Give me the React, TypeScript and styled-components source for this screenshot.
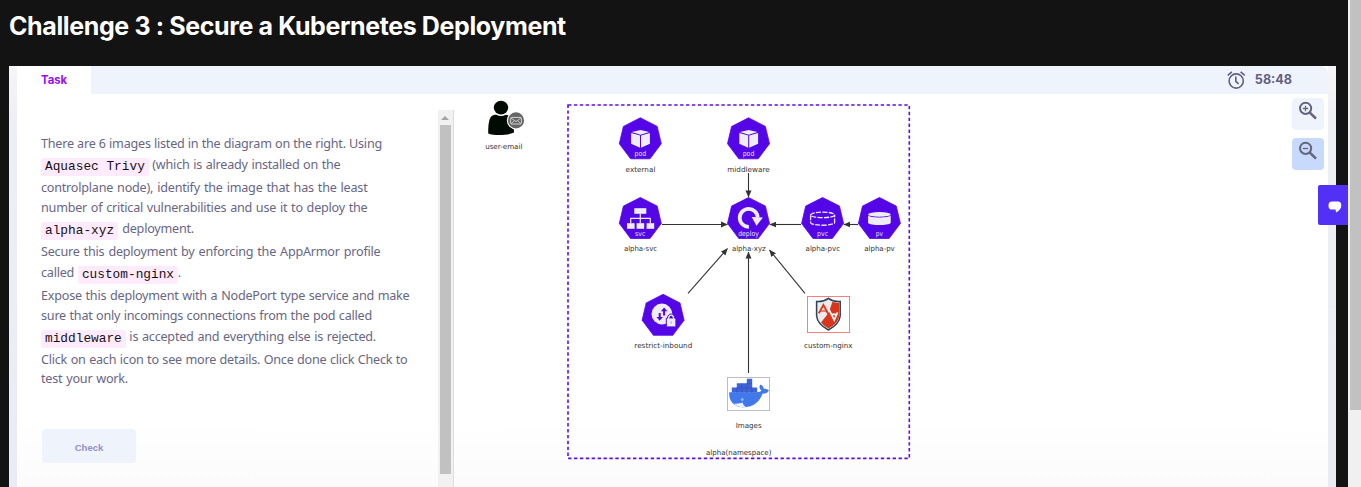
import React from "react";
import styled, { createGlobalStyle } from "styled-components";

const GlobalStyle = createGlobalStyle`
  * { box-sizing: border-box; }
  body { margin: 0; background: #131313; overflow: hidden; }
`;

const Page = styled.div`
  display: flex;
  width: 1361px;
  height: 487px;
  overflow: hidden;
  background: #131313;
`;

const Main = styled.main`
  position: relative;
  display: flex;
  flex-direction: column;
  width: 1348px;
`;

const Title = styled.h1`
  margin: 0;
  height: 66px;
  padding: 11px 0 0 9px;
  color: #fff;
  font: 700 25px/30px Inter, sans-serif;
  letter-spacing: -0.38px;
  white-space: nowrap;
`;

const Frame = styled.div`
  flex: 1;
  display: flex;
  margin: 0 12px 0 9px;
  padding: 0 8px;
  background: linear-gradient(180deg, #f6f6f8 0, #eeeef5 50px, #ebecf3 100%);
`;

const Panel = styled.section`
  flex: 1;
  display: flex;
  flex-direction: column;
  background: linear-gradient(180deg, #fff 84%, #fbfbfb 100%);
`;

const TabBar = styled.header`
  display: flex;
  justify-content: space-between;
  height: 28px;
  background: #eff3fc;
  border-top-right-radius: 8px;
`;

const Tab = styled.div`
  width: 74px;
  padding-left: 24px;
  background: #fff;
  color: #9b0bfb;
  font: 700 11.3px/28px Inter, sans-serif;
`;

const Timer = styled.div`
  display: flex;
  align-items: center;
  gap: 9px;
  margin-right: 36px;
  color: #5f5f80;
  font: 700 12.6px/26px Inter, sans-serif;
`;

const Columns = styled.div`
  flex: 1;
  display: flex;
  min-height: 0;
`;

const TaskPane = styled.div`
  width: 421px;
  padding: 40px 0 0 24px;
`;

const Line = styled.div<{ $width: number; $code?: boolean; $last?: boolean }>`
  width: ${(p) => p.$width}px;
  height: ${(p) => (p.$code ? 24 : p.$last ? 18 : 20)}px;
  color: #696683;
  font-family: "Noto Sans", sans-serif;
  font-size: 12.6px;
  line-height: ${(p) => (p.$code ? 22 : p.$last ? 18 : 20)}px;
  letter-spacing: -0.22px;
  text-align-last: justify;
  white-space: nowrap;
`;

const Code = styled.code`
  display: inline-block;
  height: 18px;
  padding: 0 3.8px 0 4px;
  border-radius: 2px;
  background: #ffebfb;
  color: #161016;
  font: 12.8px/17px "Liberation Mono", monospace;
  letter-spacing: 0;
  vertical-align: -1px;
`;

const CheckButton = styled.button`
  display: block;
  width: 94px;
  height: 34px;
  margin: 41px 0 0 1px;
  padding: 3px 0 0;
  border: 0;
  border-radius: 3px;
  background: #eff3fb;
  color: #9590c4;
  font: 700 9.5px "Liberation Sans", sans-serif;
`;

const PaneScroll = styled.div`
  display: flex;
  flex-direction: column;
  align-items: center;
  width: 16px;
  margin-top: 16px;
  padding-right: 1px;
  background: #f1f1f1;
  border-right: 1px solid #dcdbe9;
`;

const ArrowUp = styled.div`
  width: 0;
  height: 0;
  margin: 6px 0 5px;
  border: 4px solid transparent;
  border-top: 0;
  border-bottom-color: #a3a3a3;
`;

const PaneThumb = styled.div`
  width: 11px;
  height: 349px;
  background: #c1c1c1;
`;

const Canvas = styled.svg`
  display: block;
  width: 838px;
  height: 393px;
`;

const Tools = styled.div`
  display: flex;
  flex-direction: column;
  gap: 8px;
  padding-top: 4px;
`;

const ToolButton = styled.button<{ $active?: boolean }>`
  display: flex;
  width: 32px;
  height: 32px;
  padding: 3px 0 0 6px;
  border: 0;
  border-radius: 4px;
  background: ${(p) => (p.$active ? "#c8dafc" : "#eff3fb")};
`;

const Chat = styled.button`
  position: absolute;
  right: 0;
  top: 185px;
  width: 30px;
  height: 40px;
  padding: 7px 0 0 3px;
  border: 0;
  border-radius: 2px 0 0 2px;
  background: #5230f5;
`;

const PageScroll = styled.aside`
  width: 13px;
  padding-left: 2px;
  background: #f0f0f0;
`;

const PageThumb = styled.div`
  height: 410px;
  background: #c1c1c1;
`;

const Hepta = ({ x, y, label, width, children }: {
  x: number; y: number; label?: string; width?: number; children: React.ReactNode;
}) => (
  <g transform={`translate(${x} ${y})`}>
    <path d="M0 0.3 16.9 8.9 21 26.2 9.7 41.3H-9.7L-21 26.2-16.9 8.9Z" fill="#5406e6" stroke="#5406e6" strokeWidth="0.8" strokeLinejoin="round" />
    {children}
    {label && (
      <text y="38.6" textAnchor="middle" textLength={width} lengthAdjust="spacingAndGlyphs" fontSize="7" fill="#e9e7f5" fontFamily="DejaVu Sans, sans-serif">{label}</text>
    )}
  </g>
);

const Pod = () => (
  <g fill="#eeedf3">
    <path d="M-8.6 14.6 0.2 12.6 9 14.6 0.2 17.2Z" />
    <path d="M-9.2 15.5-.3 18.1V30.2L-9.2 26.2Z" />
    <path d="M9.6 15.5.7 18.1V30.2L9.6 26.2Z" />
  </g>
);

const labels: [string, number, number, number][] = [
  ["user-email", 503.8, 148.7, 37.3],
  ["external", 640.5, 171.7, 29.8],
  ["middleware", 748.5, 171.7, 42.4],
  ["alpha-svc", 640.5, 250.7, 33.2],
  ["alpha-xyz", 748.8, 250.7, 33.8],
  ["alpha-pvc", 822.8, 250.7, 34.4],
  ["alpha-pv", 879.5, 250.7, 30.6],
  ["restrict-inbound", 663.3, 347.7, 58],
  ["custom-nginx", 828.3, 347.7, 48.6],
  ["Images", 748.7, 427.7, 26],
  ["alpha(namespace)", 738.7, 454.6, 65.4],
];

const edges: [number, number, number, number][] = [
  [748.5, 173, 748.5, 197],
  [662, 224.5, 727.5, 224.5],
  [801, 224.5, 769.8, 224.5],
  [858, 224.5, 843.8, 224.5],
  [688, 293.3, 727.5, 248.5],
  [805, 293.3, 769.5, 250],
  [748.5, 373, 748.5, 252],
];

const Diagram = () => (
  <Canvas viewBox="454 94 838 393">
    <defs>
      <marker id="head" viewBox="0 0 7 6" refX="6.6" refY="3" markerWidth="7" markerHeight="6.8" markerUnits="userSpaceOnUse" orient="auto">
        <path d="M0 0 7 3 0 6Z" fill="#333" />
      </marker>
    </defs>
    <rect x="568" y="105" width="341.3" height="353.4" fill="none" stroke="#5b0ff0" strokeWidth="1.6" strokeDasharray="3.4 2.5" />
    {edges.map((e, i) => (
      <line key={i} x1={e[0]} y1={e[1]} x2={e[2]} y2={e[3]} stroke="#333" strokeWidth="1.1" markerEnd="url(#head)" />
    ))}

    <g>
      <ellipse cx="501" cy="107.6" rx="7.2" ry="6.8" fill="#020a04" />
      <path d="M488.2 133.4C488.2 121 489.6 115 495 114.7H496.4C499.4 116.4 503 116.4 505.8 114.7 510.4 114.8 514 121 514 132.6 507 135.6 494 135.8 488.2 133.4Z" fill="#020a04" />
      <circle cx="516" cy="120.4" r="8.6" fill="#666" stroke="#fff" strokeWidth="1.1" />
      <rect x="510.6" y="117.4" width="10.8" height="6.6" rx="1.2" fill="none" stroke="#ddd" strokeWidth=".9" />
      <path d="M511 118 516 121.6 521 118M511 123.7 514.4 120.7M521 123.7 517.6 120.7" fill="none" stroke="#ddd" strokeWidth=".8" />
    </g>

    <Hepta x={640.3} y={117.5} label="pod" width={11.6}><Pod /></Hepta>
    <Hepta x={748.5} y={117.5} label="pod" width={11.6}><Pod /></Hepta>
    <Hepta x={640.3} y={197.2} label="svc" width={10.4}>
      <g fill="#eeedf3">
        <rect x="-6" y="11" width="12" height="5.6" />
        <rect x="-13.3" y="26" width="7.6" height="5.6" />
        <rect x="-3.7" y="26" width="7.6" height="5.6" />
        <rect x="6.3" y="26" width="7.6" height="5.6" />
        <path d="M0 16V26M-9.6 26V21.2H10V26" fill="none" stroke="#eeedf3" strokeWidth="1.2" />
      </g>
    </Hepta>
    <Hepta x={748.5} y={197.2} label="deploy" width={20.6}>
      <path d="M0.4 29.6A9 9 0 1 1 9.2 20.4" fill="none" stroke="#eeedf3" strokeWidth="3.8" />
      <path d="M3.2 19.8 14.4 20.2 8 28.6Z" fill="#eeedf3" />
    </Hepta>
    <Hepta x={822.6} y={197.2} label="pvc" width={11}>
      <ellipse cy="17.7" rx="12" ry="2.8" fill="none" stroke="#eeedf3" strokeWidth="1.3" strokeDasharray="5 1.3" />
      <path d="M-12 18V25.2C-12 29 12 29 12 25.2V18" fill="none" stroke="#eeedf3" strokeWidth="1.3" strokeDasharray="5 1.3" />
    </Hepta>
    <Hepta x={879.4} y={197.2} label="pv" width={7.2}>
      <ellipse cy="17.2" rx="11.3" ry="2.3" fill="#eeedf3" />
      <path d="M-11.3 18.4C-9 21 9 21 11.3 18.4V25.8C9 28.6-9 28.6-11.3 25.8Z" fill="#eeedf3" />
    </Hepta>
    <Hepta x={663.1} y={294}>
      <circle cx="-1.2" cy="20" r="10.4" fill="#eeedf3" />
      <path d="M1 13.4 4.2 17.2H2V21.4H0V17.2H-2.2ZM-3.4 26.8-6.6 23H-4.4V19H-2.4V23H-.2Z" fill="#5406e6" />
      <path d="M3.2 32.9V24.2H4.4C4.4 18.6 11.6 18.6 11.6 24.2H12.8V32.9Z" fill="#eeedf3" stroke="#5406e6" strokeWidth="1" />
      <path d="M6.2 24.6C6.2 20.8 9.8 20.8 9.8 24.6Z" fill="#5406e6" />
      <rect x="7.5" y="27" width="1" height="3" fill="#b9a5ea" />
    </Hepta>

    <g>
      <rect x="807.5" y="296.5" width="42" height="36" fill="#fff" stroke="#f77f7f" />
      <path d="M828.4 298.3C832 301 836 301.8 840.2 301.4V316C839.6 322 834 327 828.4 330 822.8 327 817.2 322 816.6 316V301.4C820.8 301.8 824.8 301 828.4 298.3Z" fill="#eceaea" stroke="#294553" strokeWidth="1.5" />
      <path d="M832.4 301.8C835 302.8 837 303 839.2 302.8V315.6C838.8 321 834 325.6 828.6 328.6 826 327.2 823 325 821 322.6L828.6 313Z" fill="#d8351c" />
      <path d="M818.8 313.4 823.4 305 830.4 318" fill="none" stroke="#dc3a20" strokeWidth="1.9" />
      <path d="M820.4 311H826" stroke="#dc3a20" strokeWidth="1.2" />
      <path d="M828.6 308.6 834.2 320 837.6 312.4M831 314.4H836" fill="none" stroke="#fff" strokeWidth="1.7" />
    </g>

    <g>
      <rect x="727.5" y="377.5" width="42" height="33" fill="#fff" stroke="#bdbdbd" />
      <path d="M729.2 392.2H756.5C759 392.2 760.8 391.6 761.4 390.6 759 388.6 759 386 760.6 384.6 762.4 385.4 763.6 387 763.8 388.8 765.6 388.6 767.6 389 769 390.6 767.6 393 765 394 762.4 393.8 760 401 754 407.3 743 407.3 733 407.3 728.6 400 729.2 392.2Z" fill="#4179ea" />
      <path d="M731.8 392.6V387.6H736.8V383.2H746.8V378.8H752.2V387.6H757.2V392.6Z" fill="#3f63d8" />
      <path d="M736.8 387.6V392.6M741.8 383.2V392.6M746.8 383.2V392.6M752 387.6V392.6M736.8 387.8H752M746.8 383.4H752" stroke="#3150bc" strokeWidth=".6" />
      <circle cx="742.3" cy="399.6" r="1.4" fill="#8fc1f5" />
      <path d="M733.4 403.4C737 404 740 403.4 742.6 402.6 743 404.8 744.4 406.2 746 407 740 407.4 736 406 733.4 403.4Z" fill="#edf3fd" />
    </g>

    {labels.map(([t, x, y, w]) => (
      <text key={t} x={x} y={y} textAnchor="middle" textLength={w} lengthAdjust="spacingAndGlyphs" fontSize="7.2" fill="#333" fontFamily="DejaVu Sans, sans-serif">{t}</text>
    ))}
  </Canvas>
);

const Magnifier = ({ plus }: { plus?: boolean }) => (
  <svg width="20" height="20" viewBox="0 0 20 20" fill="none" stroke="#65637e">
    <circle cx="7.6" cy="7.3" r="5.6" strokeWidth="2" />
    <path d="M11.6 11.3 18 17.7" strokeWidth="2.6" />
    <path d={plus ? "M4.8 7.5H10.2M7.5 4.8V10.2" : "M4.8 7.5H10.2"} strokeWidth="1.3" />
  </svg>
);

export default function App() {
  return (
    <Page>
      <GlobalStyle />
      <Main>
        <Title>Challenge 3 : Secure a Kubernetes Deployment</Title>
        <Frame>
          <Panel>
            <TabBar>
              <Tab>Task</Tab>
              <Timer>
                <svg width="19" height="19" viewBox="0 0 19 19" fill="none" stroke="#5f5f80" strokeWidth="1.6">
                  <circle cx="9.2" cy="10" r="7.1" />
                  <path d="M8.8 5.5V10.3L11.6 12.9M.7 4.4 4.9 .9M17.8 4.4 13.6 .9" />
                </svg>
                <span>58:48</span>
              </Timer>
            </TabBar>
            <Columns>
              <TaskPane>
                <Line $width={341}>There are 6 images listed in the diagram on the right. Using</Line>
                <Line $width={299.5} $code><Code>Aquasec Trivy</Code> (which is already installed on the</Line>
                <Line $width={326.5}>controlplane node), identify the image that has the least</Line>
                <Line $width={326.5}>number of critical vulnerabilities and use it to deploy the</Line>
                <Line $width={153} $code><Code>alpha-xyz</Code> deployment.</Line>
                <Line $width={339.5}>Secure this deployment by enforcing the AppArmor profile</Line>
                <Line $width={140} $code>called <Code>custom-nginx</Code>.</Line>
                <Line $width={368.5}>Expose this deployment with a NodePort type service and make</Line>
                <Line $width={331}>sure that only incomings connections from the pod called</Line>
                <Line $width={335} $code><Code>middleware</Code> is accepted and everything else is rejected.</Line>
                <Line $width={366.5}>Click on each icon to see more details. Once done click Check to</Line>
                <Line $width={87} $last>test your work.</Line>
                <CheckButton>Check</CheckButton>
              </TaskPane>
              <PaneScroll>
                <ArrowUp />
                <PaneThumb />
              </PaneScroll>
              <Diagram />
              <Tools>
                <ToolButton aria-label="Zoom in"><Magnifier plus /></ToolButton>
                <ToolButton aria-label="Zoom out" $active><Magnifier /></ToolButton>
              </Tools>
            </Columns>
          </Panel>
        </Frame>
        <Chat aria-label="Chat">
          <svg width="14" height="12" viewBox="0 0 14 12" fill="#fff">
            <path d="M4 .5H10A3.5 3.8 0 0 1 13.3 4.4C13.3 7.4 11 10 8 11.4L7.6 8.6H4.2A3.6 4 0 0 1 4 .5Z" />
          </svg>
        </Chat>
      </Main>
      <PageScroll><PageThumb /></PageScroll>
    </Page>
  );
}
